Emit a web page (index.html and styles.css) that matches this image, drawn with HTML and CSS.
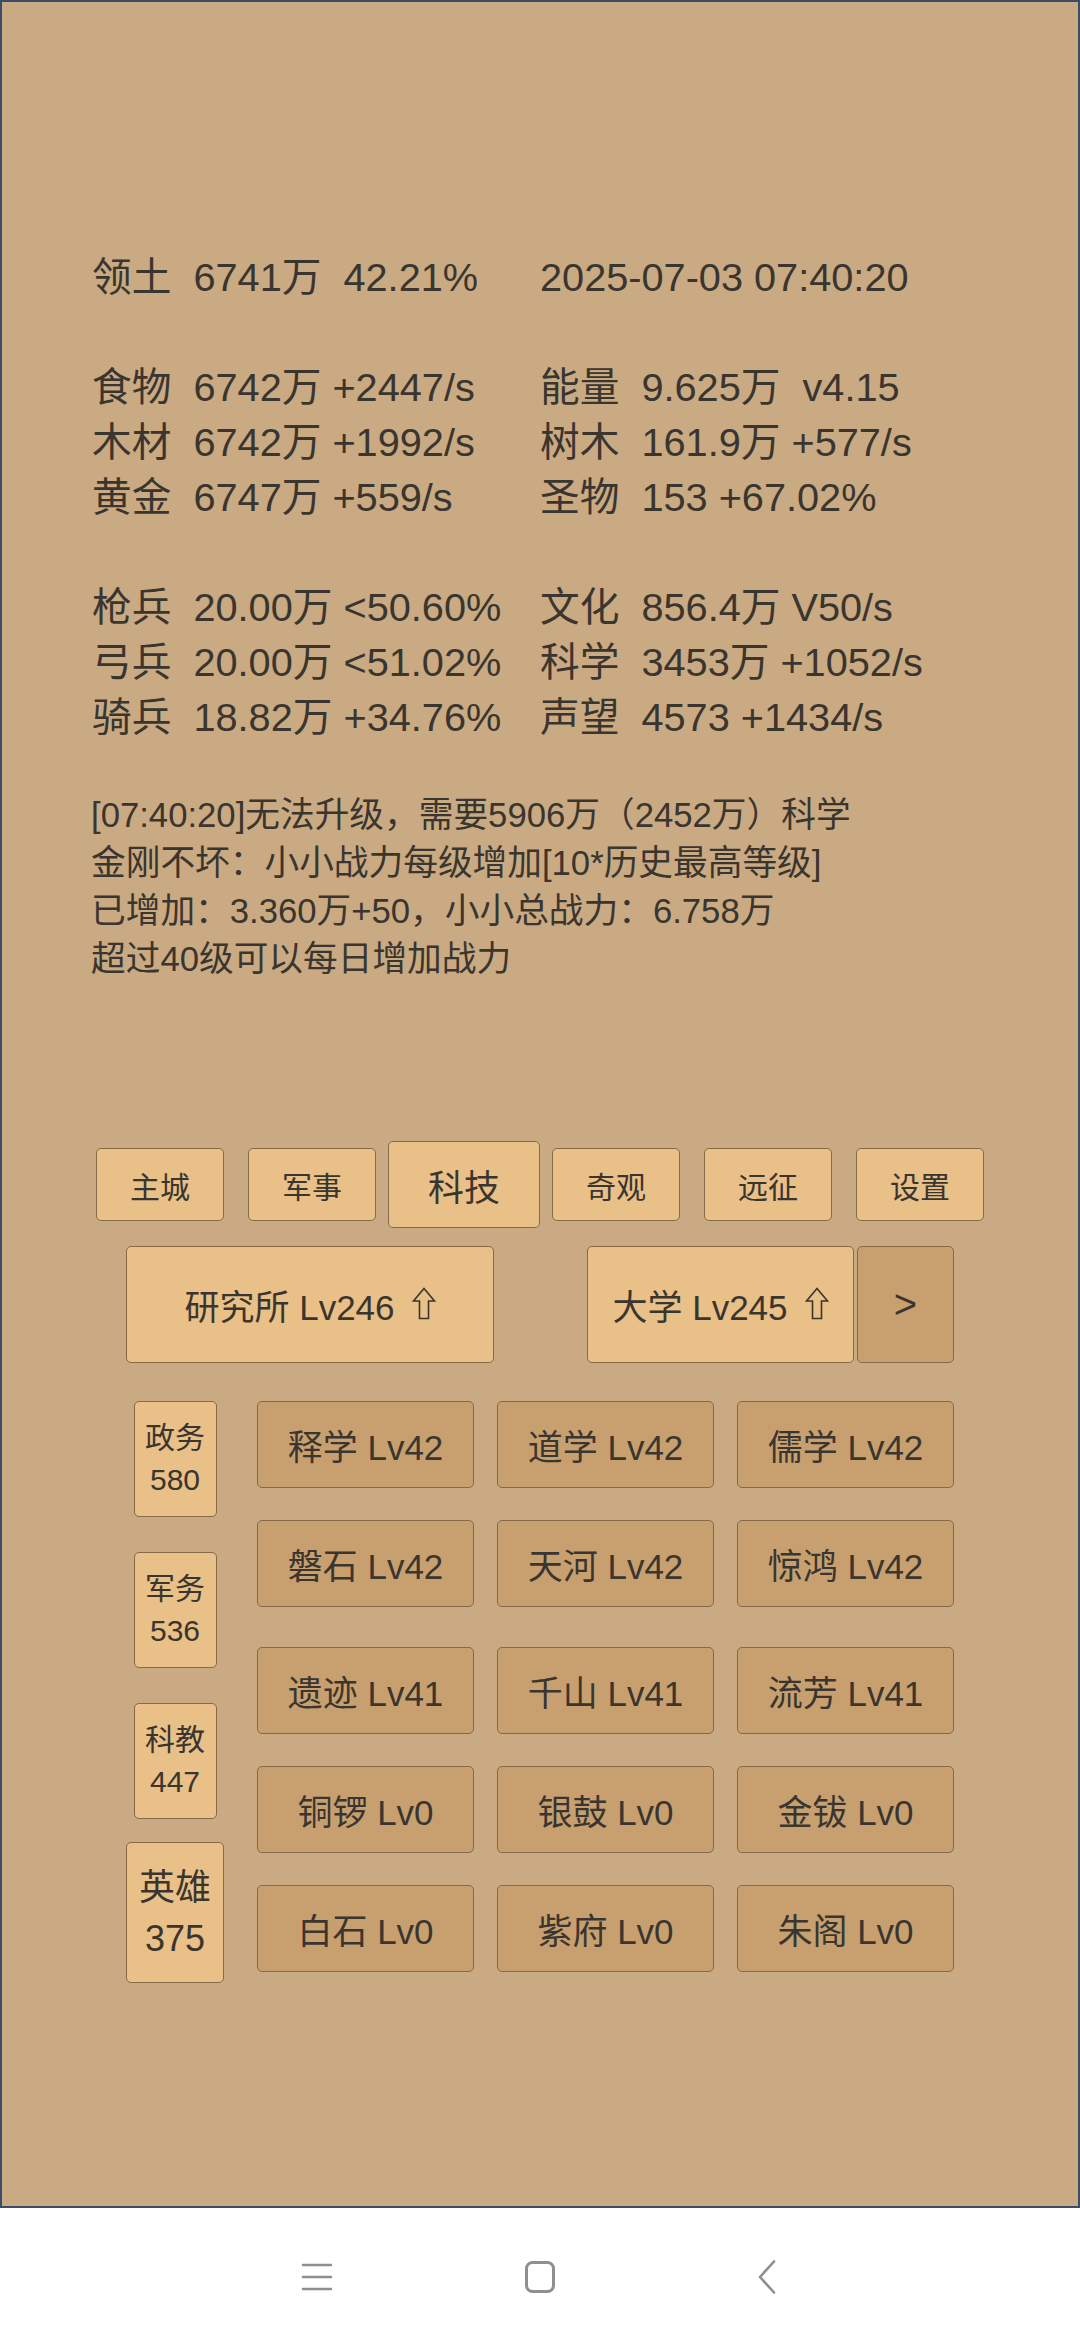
FILE: index.html
```html
<!DOCTYPE html>
<html lang="zh-CN">
<head>
    <meta charset="UTF-8">
    <meta name="viewport" content="width=device-width, initial-scale=1.0">
    <title>科技</title>
    <link rel="stylesheet" href="styles.css">
</head>
<body>
    <div class="screen">
        <div class="stats">
            <div class="stat-group">
                <div class="stat">领土  6741万  42.21%</div>
                <div class="stat">2025-07-03 07:40:20</div>
            </div>
            <div class="stat-group">
                <div class="stat">食物  6742万 +2447/s</div>
                <div class="stat">能量  9.625万  v4.15</div>
                <div class="stat">木材  6742万 +1992/s</div>
                <div class="stat">树木  161.9万 +577/s</div>
                <div class="stat">黄金  6747万 +559/s</div>
                <div class="stat">圣物  153 +67.02%</div>
            </div>
            <div class="stat-group">
                <div class="stat">枪兵  20.00万 &lt;50.60%</div>
                <div class="stat">文化  856.4万 V50/s</div>
                <div class="stat">弓兵  20.00万 &lt;51.02%</div>
                <div class="stat">科学  3453万 +1052/s</div>
                <div class="stat">骑兵  18.82万 +34.76%</div>
                <div class="stat">声望  4573 +1434/s</div>
            </div>
        </div>

        <div class="message">
            <p>[07:40:20]无法升级，需要5906万（2452万）科学</p>
            <p>金刚不坏：小小战力每级增加[10*历史最高等级]</p>
            <p>已增加：3.360万+50，小小总战力：6.758万</p>
            <p>超过40级可以每日增加战力</p>
        </div>

        <div class="tabs">
            <div class="tab">主城</div>
            <div class="tab">军事</div>
            <div class="tab active">科技</div>
            <div class="tab">奇观</div>
            <div class="tab">远征</div>
            <div class="tab">设置</div>
        </div>

        <div class="buildings">
            <div class="building wide">研究所 Lv246
                <svg class="arrow" width="24" height="33" viewBox="0 0 24 33">
                    <path d="M12 1.5L22.5 14H16.5V31.5H7.5V14H1.5Z" fill="none" stroke="#3a352f" stroke-width="1.6"/>
                </svg>
            </div>
            <div class="building-pair">
                <div class="building">大学 Lv245
                    <svg class="arrow" width="24" height="33" viewBox="0 0 24 33">
                        <path d="M12 1.5L22.5 14H16.5V31.5H7.5V14H1.5Z" fill="none" stroke="#3a352f" stroke-width="1.6"/>
                    </svg>
                </div>
                <div class="building next">&gt;</div>
            </div>
        </div>

        <div class="tech">
            <div class="side">
                <div class="side-btn">政务<br>580</div>
                <div class="side-btn">军务<br>536</div>
                <div class="side-btn">科教<br>447</div>
                <div class="side-btn active">英雄<br>375</div>
            </div>
            <div class="tech-grid">
                <div class="tech-row">
                    <div class="tech-btn">释学 Lv42</div>
                    <div class="tech-btn">道学 Lv42</div>
                    <div class="tech-btn">儒学 Lv42</div>
                </div>
                <div class="tech-row">
                    <div class="tech-btn">磐石 Lv42</div>
                    <div class="tech-btn">天河 Lv42</div>
                    <div class="tech-btn">惊鸿 Lv42</div>
                </div>
                <div class="tech-row spaced">
                    <div class="tech-btn">遗迹 Lv41</div>
                    <div class="tech-btn">千山 Lv41</div>
                    <div class="tech-btn">流芳 Lv41</div>
                </div>
                <div class="tech-row">
                    <div class="tech-btn">铜锣 Lv0</div>
                    <div class="tech-btn">银鼓 Lv0</div>
                    <div class="tech-btn">金钹 Lv0</div>
                </div>
                <div class="tech-row">
                    <div class="tech-btn">白石 Lv0</div>
                    <div class="tech-btn">紫府 Lv0</div>
                    <div class="tech-btn">朱阁 Lv0</div>
                </div>
            </div>
        </div>
    </div>

    <div class="navbar">
        <div class="nav-icon">
            <svg width="32" height="30" viewBox="0 0 32 30">
                <path d="M2 3h28M2 15h28M2 27h28" stroke="#8f8f8f" stroke-width="2.6" stroke-linecap="round"/>
            </svg>
        </div>
        <div class="nav-icon">
            <svg width="32" height="32" viewBox="0 0 32 32">
                <rect x="2.5" y="1.5" width="27" height="29" rx="6" fill="none" stroke="#8f8f8f" stroke-width="3"/>
            </svg>
        </div>
        <div class="nav-icon back">
            <svg width="20" height="34" viewBox="0 0 20 34">
                <path d="M17 1.5L3 17l14 15.5" fill="none" stroke="#8f8f8f" stroke-width="2.6" stroke-linecap="round" stroke-linejoin="round"/>
            </svg>
        </div>
    </div>
</body>
</html>
```

FILE: styles.css
```css
body {
    margin: 0;
    width: 1080px;
    height: 2340px;
    background-color: #ffffff;
    font-family: "Liberation Sans", "Noto Sans CJK SC", sans-serif;
    color: #3a352f;
}

.screen {
    box-sizing: border-box;
    height: 2208px;
    border: 2px solid #3e4b68;
    background-color: #c9aa82;
    padding-top: 248px;
}

.stats {
    padding-left: 90px;
    font-size: 39.7px;
    line-height: 55px;
}

.stat-group {
    display: grid;
    grid-template-columns: 448px auto;
    margin-bottom: 55px;
}

.stat-group:last-child {
    margin-bottom: 0;
}

.stat {
    white-space: pre;
}

.message {
    margin-top: 46px;
    padding-left: 89px;
    font-size: 34.7px;
    line-height: 48px;
}

.message p {
    margin: 0;
}

.tabs {
    display: flex;
    justify-content: center;
    align-items: center;
    margin-top: 158px;
    height: 87px;
}

.tab {
    box-sizing: border-box;
    width: 128px;
    height: 73px;
    margin: 0 12px;
    display: flex;
    justify-content: center;
    align-items: center;
    background-color: #e9c087;
    border: 1px solid #876848;
    border-radius: 5px;
    font-size: 30px;
}

.tab.active {
    width: 152px;
    height: 87px;
    margin: 0;
    font-size: 36px;
}

.buildings {
    display: flex;
    justify-content: center;
    gap: 93px;
    margin-top: 18px;
}

.building-pair {
    display: flex;
    gap: 3px;
}

.building {
    box-sizing: border-box;
    width: 267px;
    height: 117px;
    display: flex;
    justify-content: center;
    align-items: center;
    gap: 17px;
    background-color: #e9c087;
    border: 1px solid #876848;
    border-radius: 5px;
    font-size: 35px;
}

.building.wide {
    width: 368px;
}

.building.next {
    width: 97px;
    background-color: #c8a070;
    font-size: 40px;
}

.arrow {
    display: block;
    margin-top: -2px;
}

.tech {
    display: flex;
    align-items: flex-start;
    gap: 33px;
    margin-top: 38px;
    padding-left: 124px;
}

.side {
    width: 98px;
    display: flex;
    flex-direction: column;
    align-items: center;
    gap: 35px;
}

.side-btn {
    box-sizing: border-box;
    width: 83px;
    height: 116px;
    display: flex;
    justify-content: center;
    align-items: center;
    text-align: center;
    background-color: #e9c087;
    border: 1px solid #876848;
    border-radius: 5px;
    font-size: 30px;
    line-height: 42px;
}

.side-btn.active {
    width: 98px;
    height: 141px;
    margin-top: -12px;
    font-size: 36px;
    line-height: 51px;
}

.tech-grid {
    display: flex;
    flex-direction: column;
    gap: 32px;
}

.tech-row {
    display: flex;
    gap: 23px;
}

.tech-row.spaced {
    margin-top: 8px;
}

.tech-btn {
    box-sizing: border-box;
    width: 217px;
    height: 87px;
    display: flex;
    justify-content: center;
    align-items: center;
    background-color: #c8a070;
    border: 1px solid #876848;
    border-radius: 5px;
    font-size: 35px;
}

.navbar {
    height: 132px;
    display: flex;
    justify-content: center;
    align-items: center;
    gap: 163px;
    margin-top: 3px;
}

.nav-icon {
    width: 60px;
    display: flex;
    justify-content: center;
}

.nav-icon.back {
    padding-left: 8px;
    box-sizing: border-box;
}
```
